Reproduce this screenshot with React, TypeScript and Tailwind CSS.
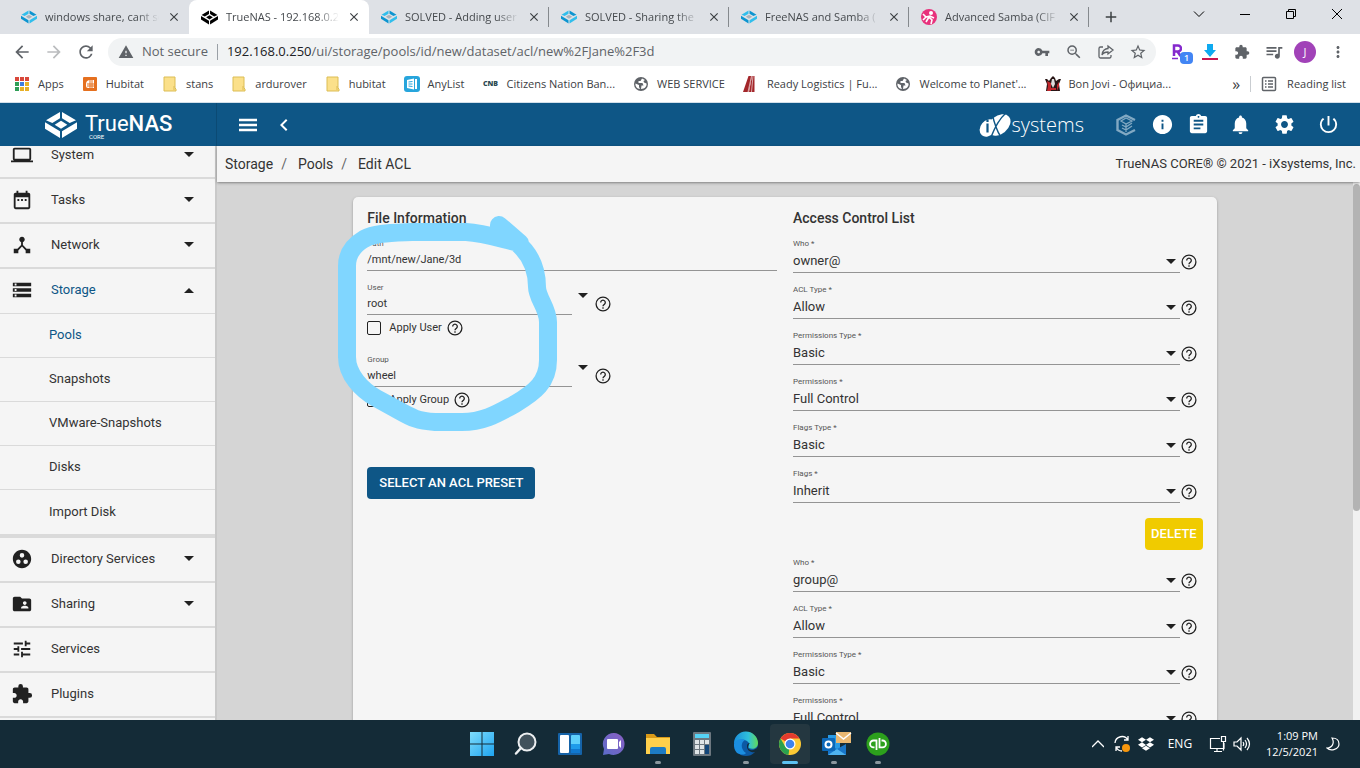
import { useState } from "react";
import type { ReactNode } from "react";
import {
    MdAdd, MdArrowBack, MdArrowForward, MdAssignment, MdChevronLeft, MdClose, MdDateRange,
    MdDeviceHub, MdExtension, MdFolderShared, MdGroupWork, MdInfo, MdLaptop,
    MdMoreVert, MdNotifications, MdPowerSettingsNew, MdQueueMusic, MdRefresh,
    MdSettings, MdStarBorder, MdStorage, MdTune, MdVpnKey, MdWarning, MdZoomOut,
} from "react-icons/md";
import { FaDropbox } from "react-icons/fa";

/* ---------- small drawings ---------- */

function NasMark({ className, light, dark, core }: { className: string; light: string; dark: string; core: string }) {
    return (
        <svg viewBox="0 0 96 78" className={className} aria-hidden="true">
            <path d="M45 0v19L22 33 3 25z" fill={light} />
            <path d="M51 0v19l23 14 19-8z" fill={dark} />
            <path d="M0 31l45 27v20L0 50z" fill={dark} />
            <path d="M96 31L51 58v20l45-28z" fill={light} />
            <path d="M48 26l19 12-19 12-19-12z" fill={core} />
        </svg>
    );
}

const BlueMark = () => <NasMark className="h-[14px] w-4 shrink-0" light="#31beec" dark="#0d95d0" core="#a8b4bd" />;
const BlackMark = () => <NasMark className="h-[15px] w-[17px] shrink-0" light="#000" dark="#000" core="#000" />;

function SambaMark() {
    return (
        <svg viewBox="0 0 16 16" className="size-4 shrink-0" aria-hidden="true">
            <circle cx="8" cy="8" r="8" fill="#e8317c" />
            <circle cx="10" cy="4" r="2" fill="#fff" />
            <path d="M2 5l3 3 4-1 4 2M8 8l-3 5M8 8l3 3-1 4M5 8l-3 3" stroke="#fff" strokeWidth="1.6" fill="none" />
        </svg>
    );
}

function AppsMark() {
    const colors = ["#d9483b", "#d9483b", "#d9483b", "#2f9e57", "#3f7de0", "#e8b026", "#2f9e57", "#e8b026", "#e8b026"];
    return (
        <svg viewBox="0 0 16 16" className="size-4" aria-hidden="true">
            {colors.map((c, i) => (
                <rect key={i} x={1 + (i % 3) * 5} y={1 + Math.floor(i / 3) * 5} width="4" height="4" fill={c} />
            ))}
        </svg>
    );
}

const HubitatMark = () => (
    <svg viewBox="0 0 16 16" className="size-4" aria-hidden="true">
        <rect x="1" y="1" width="14" height="14" rx="1" fill="#e5701f" />
        <path d="M4 8c0-3 2-4 4-4h4v8H6a2 2 0 0 1-2-2z" fill="#fff" />
        <path d="M5 8h7M5 10h7M8 4v8M10 4v8" stroke="#e5701f" strokeWidth="1" />
    </svg>
);

const FolderMark = () => (
    <svg viewBox="0 0 16 16" className="size-4" aria-hidden="true">
        <path d="M2 1h11v11l1 1v2H2z" fill="#fbe08a" stroke="#dcbd55" />
        <path d="M12 10v4" stroke="#dcbd55" />
    </svg>
);

const AnyListMark = () => (
    <svg viewBox="0 0 16 16" className="size-4" aria-hidden="true">
        <rect width="16" height="16" rx="3" fill="#27a5dc" />
        <path d="M3 4l7-1.500v11L3 12zM11 3h2v10h-2z" fill="#fff" />
        <path d="M4.500 6l4-.5M4.500 8h4M4.500 10l4 .5" stroke="#27a5dc" />
    </svg>
);

const CnbMark = () => <span className="w-4 text-center text-[7px] font-extrabold text-[#2c4a52]">CNB</span>;

const ReadyMark = () => (
    <svg viewBox="0 0 16 16" className="size-4" aria-hidden="true">
        <path d="M5.500 0h3L5 16H0zM9 0h2.500v16H6z" fill="#a3262a" />
        <path d="M7 0h2L5.500 16H3z" fill="#a3262a" />
        <path d="M8.500 0L5 16M10 0L8.500 16" stroke="#fff" strokeWidth=".6" />
    </svg>
);

const BonJoviMark = () => (
    <svg viewBox="0 0 16 16" className="size-4" aria-hidden="true">
        <path d="M0 3h2l2 2 2-3 2-2 2 2 1 3 3-2h2l-2 5 1 7H1l1-7z" fill="#281515" />
        <path d="M2 5l4 2v8H2l1-5zM12 9l2-3v4l-2 5z" fill="#c1272d" />
        <path d="M7 3h2l1 5-2 4-2-4z" fill="#ddd" />
        <path d="M6 13h5" stroke="#c1272d" strokeWidth="2" />
    </svg>
);

const Globe = () => (
    <svg viewBox="0 0 16 16" className="size-4" aria-hidden="true">
        <circle cx="8" cy="8" r="7" fill="#5f6368" />
        <path d="M9 2.500L7.500 5H5.500v2h4l1 2.500H8.500L8 13c4 0 6-3 5.500-5.500L11 6.500 10.500 5l1.500-1zM2.500 7.500L6 9v2l1 2C4 13 2 10 2.500 7.500z" fill="#fff" />
    </svg>
);

function ShareMark() {
    return (
        <svg viewBox="0 0 18 18" className="size-[18px]" fill="none" stroke="currentColor" strokeWidth="1.300" aria-hidden="true">
            <path d="M6 4H3.500A1.500 1.500 0 0 0 2 5.500v8A1.500 1.500 0 0 0 3.500 15h9a1.500 1.500 0 0 0 1.500-1.500V12" />
            <path d="M11 3l5 4-5 4V9c-3 0-5 1-6 3 0-4 3-6.500 6-6.500z" />
        </svg>
    );
}

function ReadingMark() {
    return (
        <svg viewBox="0 0 16 16" className="size-4" fill="none" stroke="#5f6368" strokeWidth="1.500" aria-hidden="true">
            <rect x="1.500" y="1.500" width="13" height="13" rx="1" />
            <path d="M4 5h1.500M4 8h1.500M4 11h1.500M7 5h5M7 8h5M7 11h5" />
        </svg>
    );
}

function Caret({ up }: { up?: boolean }) {
    return (
        <svg viewBox="0 0 10 5" className="h-[5px] w-2.5 shrink-0" aria-hidden="true">
            <path d={up ? "M0 5l5-5 5 5z" : "M0 0h10L5 5z"} fill="#212121" />
        </svg>
    );
}

const Help = () => (
    <svg viewBox="0 0 18 18" className="size-[18px] shrink-0" fill="none" stroke="#212121" strokeWidth="1.300" aria-hidden="true">
        <circle cx="9" cy="9" r="6.900" />
        <path d="M6.700 7.500a2.300 2.300 0 1 1 3.600 1.900C9.500 10 9 10.300 9 11.300M9 12.200v1.500" />
    </svg>
);

/* ---------- browser ---------- */

const tabs = [
    { title: "windows share, cant se", icon: <BlueMark /> },
    { title: "TrueNAS - 192.168.0.2", icon: <BlackMark />, active: true },
    { title: "SOLVED - Adding user", icon: <BlueMark /> },
    { title: "SOLVED - Sharing the", icon: <BlueMark /> },
    { title: "FreeNAS and Samba (", icon: <BlueMark /> },
    { title: "Advanced Samba (CIF", icon: <SambaMark /> },
];

const bookmarks: { title: string; icon: ReactNode }[] = [
    { title: "Apps", icon: <AppsMark /> },
    { title: "Hubitat", icon: <HubitatMark /> },
    { title: "stans", icon: <FolderMark /> },
    { title: "ardurover", icon: <FolderMark /> },
    { title: "hubitat", icon: <FolderMark /> },
    { title: "AnyList", icon: <AnyListMark /> },
    { title: "Citizens Nation Ban...", icon: <CnbMark /> },
    { title: "WEB SERVICE", icon: <Globe /> },
    { title: "Ready Logistics | Fu...", icon: <ReadyMark /> },
    { title: "Welcome to Planet'...", icon: <Globe /> },
    { title: "Bon Jovi - Официа...", icon: <BonJoviMark /> },
];

function TabStrip() {
    return (
        <div className="flex h-[34px] shrink-0 items-stretch bg-[#dee1e6] pl-[9px] text-[#45494d]">
            {tabs.map((tab, i) => (
                <div
                    key={tab.title}
                    className={`relative flex min-w-0 basis-[180px] items-center gap-2 pr-2 pl-3 ${tab.active ? "rounded-t-lg bg-white" : ""}`}
                >
                    {tab.icon}
                    <span className="min-w-0 flex-1 mask-r-from-80% text-[11px] whitespace-nowrap">{tab.title}</span>
                    <button aria-label="Close tab" className="shrink-0">
                        <MdClose className="size-[14px] text-[#3c4043]" />
                    </button>
                    {i > 1 && <span className="absolute right-0 h-5 w-px bg-[#85898d]" />}
                </div>
            ))}
            <button aria-label="New tab" className="flex w-11 items-center justify-center">
                <MdAdd className="size-[18px] text-[#3c4043]" />
            </button>
            <div className="ml-auto flex text-black">
                <button aria-label="Search tabs" className="flex w-[46px] items-start justify-center pt-2">
                    <svg viewBox="0 0 12 12" className="size-3" fill="none" stroke="currentColor"><path d="M1 3.500l5 5 5-5" /></svg>
                </button>
                <button aria-label="Minimize" className="flex w-[46px] items-start justify-center pt-2">
                    <svg viewBox="0 0 12 12" className="size-3" fill="none" stroke="currentColor"><path d="M1 6.500h10" /></svg>
                </button>
                <button aria-label="Restore" className="flex w-[46px] items-start justify-center pt-2">
                    <svg viewBox="0 0 12 12" className="size-3" fill="none" stroke="currentColor"><path d="M1.500 3.500h7v7h-7zM3.500 3.500v-2h7v7h-2" /></svg>
                </button>
                <button aria-label="Close" className="flex w-[46px] items-start justify-center pt-2">
                    <svg viewBox="0 0 12 12" className="size-3" fill="none" stroke="currentColor"><path d="M1 1l10 10M11 1L1 11" /></svg>
                </button>
            </div>
        </div>
    );
}

function AddressBar() {
    return (
        <div className="flex h-9 shrink-0 items-center bg-white pr-2 pl-3 text-[#5f6368]">
            <button aria-label="Back" className="w-8"><MdArrowBack className="size-5" /></button>
            <button aria-label="Forward" className="w-8"><MdArrowForward className="size-5 text-[#babcbe]" /></button>
            <button aria-label="Reload" className="w-8"><MdRefresh className="size-5" /></button>
            <div className="flex h-7 flex-1 items-center rounded-full bg-[#f1f3f4] px-2">
                <MdWarning className="ml-0.5 size-4" />
                <span className="ml-2 text-[13px]">Not secure</span>
                <span className="mx-[9px] h-4 w-px bg-[#9aa0a6]" />
                <p className="flex-1 text-[13px] whitespace-nowrap">
                    <span className="text-[#202124]">192.168.0.250</span>/ui/storage/pools/id/new/dataset/acl/new%2FJane%2F3d
                </p>
                <div className="flex items-center">
                    <button aria-label="Passwords" className="flex w-8 justify-center"><MdVpnKey className="size-4" /></button>
                    <button aria-label="Zoom" className="flex w-8 justify-center"><MdZoomOut className="size-[18px]" /></button>
                    <button aria-label="Share" className="flex w-8 justify-center"><ShareMark /></button>
                    <button aria-label="Bookmark" className="-mr-1.5 flex w-8 justify-center"><MdStarBorder className="size-[18px]" /></button>
                </div>
            </div>
            <div className="ml-1.5 flex items-center">
                <button aria-label="Rakuten" className="relative h-7 w-8 pl-2.5 text-left">
                    <svg viewBox="0 0 10 16" className="h-4 w-2.5" fill="none" stroke="#8529cd" strokeWidth="2.500" aria-hidden="true">
                        <path d="M2 12V1.500h4a2.500 2.500 0 0 1 0 6H3M5.500 7.500L8.500 12" />
                        <path d="M0 14.500h6" strokeWidth="1.500" />
                    </svg>
                    <span className="absolute top-3.5 left-[18px] rounded-sm bg-[#4285f4] px-1 text-[9px] leading-3 font-semibold text-white">1</span>
                </button>
                <button aria-label="Downloads" className="flex w-8 justify-center">
                    <svg viewBox="0 0 16 16" className="size-4"><path d="M5 0h6v6h3l-6 7-6-7h3z" fill="#0eaaf0" /><path d="M0 15h16" stroke="#c8154f" strokeWidth="2" /></svg>
                </button>
                <button aria-label="Extensions" className="flex w-8 justify-center"><MdExtension className="size-4" /></button>
                <button aria-label="Media" className="flex w-8 justify-center"><MdQueueMusic className="size-5" /></button>
                <button aria-label="Profile" className="mx-1 flex size-[22px] items-center justify-center rounded-full bg-[#a142b8] text-[11px] text-white">J</button>
                <button aria-label="Menu" className="ml-1 flex w-7 justify-center"><MdMoreVert className="size-[18px]" /></button>
            </div>
        </div>
    );
}

function BookmarksBar() {
    return (
        <nav className="flex h-[33px] shrink-0 items-center border-b border-[#d3e0ea] bg-white px-3.5 pb-1 text-[11px] whitespace-nowrap text-[#3c4043]">
            <div className="flex items-center gap-[18px]">
                {bookmarks.map((b, i) => (
                    <a key={i} href="#" className="flex items-center gap-2">
                        {b.icon}
                        {b.title}
                    </a>
                ))}
            </div>
            <button aria-label="More bookmarks" className="ml-auto px-2.5 text-[16px] leading-4">»</button>
            <a href="#" className="flex items-center gap-2.5 border-l border-[#c9cdd1] pl-2.5"><ReadingMark />Reading list</a>
        </nav>
    );
}

/* ---------- TrueNAS ---------- */

function Header() {
    return (
        <header className="flex h-[43px] shrink-0 items-center bg-[#0e5686] text-white">
            <a href="#" aria-label="TrueNAS Core" className="flex h-full w-[217px] items-center border-r border-[#0b4a74] pl-[45px]">
                <NasMark className="h-[26px] w-8" light="#fff" dark="#fff" core="#fff" />
                <span className="mt-1 ml-2 flex flex-col">
                    <span className="text-[22px] leading-5">Tru<span>e</span><span className="font-medium">NAS</span></span>
                    <span className="pl-1 text-[6px] leading-[6px]">CORE</span>
                </span>
            </a>
            <button aria-label="Toggle menu" className="ml-[22px]">
                <svg viewBox="0 0 18 14" className="h-3.5 w-[18px]" stroke="currentColor" strokeWidth="2.500"><path d="M0 2h18M0 7h18M0 12h18" /></svg>
            </button>
            <button aria-label="Collapse menu" className="ml-[15px]"><MdChevronLeft className="size-6" stroke="currentColor" /></button>
            <div className="mr-0.5 ml-auto flex items-center">
                <a href="#" aria-label="iXsystems" className="mr-6 flex items-center">
                    <svg viewBox="0 0 32 24" className="h-6 w-8" aria-hidden="true">
                        <ellipse cx="9" cy="15" rx="9.500" ry="7.500" transform="rotate(-50 9 15)" fill="#fff" />
                        <ellipse cx="20" cy="12" rx="13" ry="9" transform="rotate(-40 20 12)" fill="#fff" />
                        <path d="M8.500 10.500v9M8.500 6.500v2.500" stroke="#0e5686" strokeWidth="2.200" />
                        <path d="M13 0c2 9 4 17 9 24M27 0c-7 6-11 14-15 24" stroke="#0e5686" strokeWidth="1.400" fill="none" />
                    </svg>
                    <span className="ml-px font-['Open_Sans'] text-[20px] leading-6 font-light">systems</span>
                </a>
                <button aria-label="TrueCommand" className="flex w-9 justify-center">
                    <svg viewBox="0 0 20 22" className="h-[22px] w-5" fill="none" stroke="#82a9c3" strokeWidth="2.400" aria-hidden="true">
                        <path d="M19 6L10 1.500 1.500 6v10l8.500 4.500L19 16" />
                        <path d="M16 7l-6-3-5 3 5 3zM6 11l4 2 6-4M6 14l4 2 6-4M10 10v8" strokeWidth="1.300" />
                    </svg>
                </button>
                <button aria-label="About" className="flex w-9 justify-center"><MdInfo className="size-[23px]" /></button>
                <button aria-label="Task manager" className="flex w-9 justify-center"><MdAssignment className="size-[23px]" /></button>
            </div>
            <div className="flex items-center pr-2.5">
                <button aria-label="Notifications" className="flex w-11 justify-center"><MdNotifications className="size-[23px]" /></button>
                <button aria-label="Settings" className="flex w-11 justify-center"><MdSettings className="size-[23px]" /></button>
                <button aria-label="Power" className="flex w-11 justify-center"><MdPowerSettingsNew className="size-[23px]" /></button>
            </div>
        </header>
    );
}

function SideItem({ icon, label, caret, open }: { icon: ReactNode; label: string; caret?: boolean; open?: boolean }) {
    return (
        <li>
            <button
                aria-expanded={caret ? !!open : undefined}
                className={`flex h-[45px] w-full items-center border-[#dadada] pr-[21px] pb-0.5 pl-[11px] text-left ${open ? "border-b text-[#0e5686]" : "border-b-2"}`}
            >
                <span className="text-[22px] text-[#212121]">{icon}</span>
                <span className="ml-[18px] flex-1">{label}</span>
                {caret && <Caret up={open} />}
            </button>
        </li>
    );
}

const storageItems = ["Pools", "Snapshots", "VMware-Snapshots", "Disks", "Import Disk"];

function Sidebar() {
    return (
        <nav className="w-[217px] shrink-0 overflow-hidden border-r-2 border-[#c9c9c9] bg-[#f5f5f5] text-[13px] text-[#333]">
            <ul className="-mt-3">
                <SideItem icon={<MdLaptop />} label="System" caret />
                <SideItem icon={<MdDateRange />} label="Tasks" caret />
                <SideItem icon={<MdDeviceHub />} label="Network" caret />
                <SideItem icon={<MdStorage />} label="Storage" caret open />
                <li>
                    <ul className="border-b-4 border-[#dadada]">
                        {storageItems.map((item, i) => (
                            <li key={item}>
                                <a
                                    href="#"
                                    className={`flex h-11 items-center border-[#dadada] pb-px pl-[49px] ${i === 0 ? "text-[#0e5686]" : ""} ${i < 4 ? "border-b" : ""}`}
                                >
                                    {item}
                                </a>
                            </li>
                        ))}
                    </ul>
                </li>
                <SideItem icon={<MdGroupWork />} label="Directory Services" caret />
                <SideItem icon={<MdFolderShared />} label="Sharing" caret />
                <SideItem icon={<MdTune />} label="Services" />
                <SideItem icon={<MdExtension />} label="Plugins" />
            </ul>
        </nav>
    );
}

function TextField({ id, label, value }: { id: string; label: string; value: string }) {
    return (
        <div className="flex flex-1 flex-col border-b border-[#949494]">
            <label htmlFor={id} className="text-[8px] leading-3 text-[#555]">{label}</label>
            <input id={id} defaultValue={value} className="h-5 w-full pb-0.5 text-[11px] outline-none" />
        </div>
    );
}

function OwnerField({ name, value }: { name: string; value: string }) {
    const [apply, setApply] = useState(false);
    const id = name.toLowerCase();
    return (
        <div>
            <div className="flex items-center">
                <div className="flex w-1/2"><TextField id={id} label={name} value={value} /></div>
                <button aria-label={`Choose ${id}`} className="flex h-5 w-[22px] justify-center pt-1"><Caret /></button>
                <div className="pt-2.5"><Help /></div>
            </div>
            <div className="mt-[5px] flex h-4 items-center">
                <input
                    id={`apply-${id}`}
                    type="checkbox"
                    checked={apply}
                    onChange={(e) => setApply(e.target.checked)}
                    className="size-3.5 appearance-none rounded-xs border border-[#212121] checked:bg-[#0e5686]"
                />
                <label htmlFor={`apply-${id}`} className="mr-1 ml-2 text-[11px]">Apply {name}</label>
                <Help />
            </div>
        </div>
    );
}

function SelectField({ id, label, value }: { id: string; label: string; value: string }) {
    return (
        <div className="flex items-end">
            <div className="relative flex-1 border-b border-[#949494]">
                <label htmlFor={id} className="block text-[8px] leading-3 text-[#555]">{label} *</label>
                <select id={id} className="block h-[22px] w-full appearance-none text-[13px] outline-none">
                    <option>{value}</option>
                </select>
                <span className="pointer-events-none absolute right-1 bottom-2"><Caret /></span>
            </div>
            <div className="mr-[5px] pb-0.5"><Help /></div>
        </div>
    );
}

const aclEntries = ["owner@", "group@"];

function AclEntry({ who }: { who: string }) {
    const fields = [
        ["Who", who],
        ["ACL Type", "Allow"],
        ["Permissions Type", "Basic"],
        ["Permissions", "Full Control"],
        ["Flags Type", "Basic"],
        ["Flags", "Inherit"],
    ];
    return (
        <div className="mb-[7px]">
            <div className="flex flex-col gap-[11px]">
                {fields.map(([label, value]) => (
                    <SelectField key={label} id={`${who}-${label}`} label={label} value={value} />
                ))}
            </div>
            <div className="mt-[15px] flex justify-end">
                <button type="button" className="h-8 rounded-sm bg-[#f0cb00] px-1.5 text-[13px] font-medium text-white">DELETE</button>
            </div>
        </div>
    );
}

function MarkerCircle() {
    return (
        <svg
            viewBox="337 209 230 230"
            className="pointer-events-none absolute top-3 -left-4 size-[230px]"
            fill="none"
            stroke="#80d6ff"
            strokeWidth="18"
            strokeLinecap="round"
            strokeLinejoin="round"
            aria-hidden="true"
        >
            <path d="M499 225L520 243C505 240 485 233 466 232H412C390 233 375 233 364 239C352 246 347 256 347 266V357C347 375 362 390 376 398L398 410C412 418 418 421 435 422H462C485 422 500 412 515 404C535 392 548 382 548 360V322C548 308 537 298 537 287C537 270 532 255 516 242" />
        </svg>
    );
}

function EditAcl() {
    return (
        <main className="flex min-w-0 flex-1 flex-col">
            <div className="z-10 flex h-9 shrink-0 items-center justify-between bg-[#f5f5f5] pr-1 pl-2 text-[#333] shadow-sm shadow-black/30">
                <nav aria-label="Breadcrumb" className="flex text-[14px]">
                    <a href="#">Storage</a>
                    <span className="mr-[11px] ml-2 text-[#666]">/</span>
                    <a href="#">Pools</a>
                    <span className="mr-[11px] ml-2 text-[#666]">/</span>
                    <span>Edit ACL</span>
                </nav>
                <span className="text-[13px]">TrueNAS CORE® © 2021 - iXsystems, Inc.</span>
            </div>
            <div className="flex min-h-0 flex-1 bg-[#d5d5d5]">
                <div className="min-w-0 flex-1 overflow-hidden pt-[15px]">
                    <form className="relative mx-auto grid w-[76%] grid-cols-2 gap-4 rounded-[5px] bg-[#f5f5f5] px-3.5 pt-3 text-[#333] shadow-sm shadow-black/25">
                        <section>
                            <h2 className="mb-[11px] text-[14px] leading-[18px] font-medium">File Information</h2>
                            <TextField id="path" label="Path" value="/mnt/new/Jane/3d" />
                            <div className="mt-[11px] flex flex-col gap-[18px]">
                                <OwnerField name="User" value="root" />
                                <OwnerField name="Group" value="wheel" />
                            </div>
                            <button type="button" className="mt-[59px] h-8 rounded-sm bg-[#0e5686] px-3 text-[13px] font-medium text-white">
                                SELECT AN ACL PRESET
                            </button>
                        </section>
                        <section>
                            <h2 className="mb-[11px] text-[14px] leading-[18px] font-medium">Access Control List</h2>
                            {aclEntries.map((who) => (
                                <AclEntry key={who} who={who} />
                            ))}
                        </section>
                        <MarkerCircle />
                    </form>
                </div>
                <div className="w-[7px] shrink-0 bg-[#f1f1f1] pt-0.5">
                    <div className="h-[61%] rounded-full bg-[#b3b3b3]" />
                </div>
            </div>
        </main>
    );
}

/* ---------- taskbar ---------- */

const taskIcons: { name: string; running?: boolean; active?: boolean; icon: ReactNode }[] = [
    {
        name: "Start",
        icon: (
            <>
                <defs>
                    <linearGradient id="start-fill" x1="0" y1="0" x2="1" y2="1">
                        <stop offset="0" stopColor="#7fdcfb" />
                        <stop offset="1" stopColor="#1ea4f0" />
                    </linearGradient>
                </defs>
                <path d="M0 0h11.500v11.500H0zM12.500 0H24v11.500H12.500zM0 12.500h11.500V24H0zM12.500 12.500H24V24H12.500z" fill="url(#start-fill)" />
            </>
        ),
    },
    {
        name: "Search",
        icon: (
            <>
                <circle cx="13" cy="10" r="8.500" fill="#41525c" stroke="#eceff1" strokeWidth="2" />
                <path d="M7 16l-5 5.500" stroke="#eceff1" strokeWidth="2.500" strokeLinecap="round" />
            </>
        ),
    },
    {
        name: "Widgets",
        icon: (
            <>
                <rect y="1" width="24" height="22" rx="1" fill="#1563a8" />
                <rect x="2" y="3" width="9" height="18" rx="1" fill="#fff" />
                <rect x="13" y="3" width="9" height="10" rx="1" fill="#5fd0fb" />
                <rect x="13" y="12" width="9" height="5" fill="#1f9bea" />
                <rect x="13" y="17" width="9" height="4" fill="#1079d0" />
            </>
        ),
    },
    {
        name: "Chat",
        icon: (
            <>
                <defs>
                    <linearGradient id="chat-fill" x1="1" y1="0" x2="0" y2="1">
                        <stop offset="0" stopColor="#8a5fc4" />
                        <stop offset="1" stopColor="#5b6cc8" />
                    </linearGradient>
                </defs>
                <path d="M12 1a11 11 0 1 1-5 21L1 23l1-6A11 11 0 0 1 12 1z" fill="url(#chat-fill)" />
                <rect x="5" y="7" width="11" height="10" rx="1" fill="#fff" />
                <path d="M17 10l2-2v8l-2-2z" fill="#fff" />
            </>
        ),
    },
    {
        name: "File Explorer",
        running: true,
        icon: (
            <>
                <path d="M0 2h8l3 3h13v17H0z" fill="#d99a18" />
                <path d="M0 6h24v16H0z" fill="#ffd04c" />
                <path d="M4 22v-5a2 2 0 0 1 2-2h12a2 2 0 0 1 2 2v5z" fill="#1d7bc4" />
            </>
        ),
    },
    {
        name: "Calculator",
        icon: (
            <>
                <rect x="3" width="18" height="24" rx="1" fill="#6d7880" />
                <rect x="5" y="2" width="14" height="4" fill="#56d3f5" />
                <path d="M5 8h4v4H5zM10 8h4v4h-4zM15 8h4v4h-4zM5 13h4v4H5zM10 13h4v4h-4zM5 18h4v4H5zM10 18h4v4h-4z" fill="#dfe4e7" />
                <path d="M15 13h4v9h-4z" fill="#12467a" />
            </>
        ),
    },
    {
        name: "Edge",
        running: true,
        icon: (
            <>
                <defs>
                    <linearGradient id="edge-top" x1="0" x2="1">
                        <stop offset="0" stopColor="#1b8fdb" />
                        <stop offset="0.600" stopColor="#2fc0dc" />
                        <stop offset="1" stopColor="#62d957" />
                    </linearGradient>
                </defs>
                <circle cx="12" cy="12" r="12" fill="#0c59a4" />
                <path d="M0 12A12 12 0 0 1 24 11c0 5-5 7-9 5-1-1 0-2 0-4C15 8 5 5 0 12z" fill="url(#edge-top)" />
                <path d="M0 12c2-5 8-6 11-4-4 2-5 9 1 13-2 3-7 1-9 0a12 12 0 0 1-3-9z" fill="#1b8ee0" />
                <path d="M14 16c2 3 6 3 10-1l1 3-3 2c-5 1-9-1-9-6 0-2 1-3 3-3-2 2-2 3-2 5z" fill="#142b37" />
            </>
        ),
    },
    {
        name: "Chrome",
        running: true,
        active: true,
        icon: (
            <>
                <circle cx="12" cy="12" r="11" fill="#fcc934" />
                <path d="M12 12L2.500 6.500A11 11 0 0 1 21.500 6.500H12z" fill="#e33b2e" />
                <path d="M12 12l-1 11A11 11 0 0 1 2.500 6.500L7.500 15z" fill="#2aa14f" />
                <path d="M12 12l4.500 2.500L12 23h-1.500z" fill="#fcc934" />
                <circle cx="12" cy="12" r="5.500" fill="#fff" />
                <circle cx="12" cy="12" r="4.300" fill="#3f83ee" />
            </>
        ),
    },
    {
        name: "Outlook",
        running: true,
        icon: (
            <>
                <path d="M6 3h12v18H6z" fill="#2a9be4" />
                <path d="M6 23V12l9 5 9-5v11z" fill="#1876c9" />
                <path d="M6 23l9-6 9 6z" fill="#4fb4f0" />
                <rect y="6" width="13" height="13" rx="1" fill="#0c68b8" />
                <circle cx="6.500" cy="12.500" r="3" fill="none" stroke="#fff" strokeWidth="2" />
                <path d="M14 0h15v11H14z" fill="#e9b872" />
                <path d="M14 1l7.500 6L29 1" stroke="#fff" strokeWidth="1.500" fill="none" />
            </>
        ),
    },
    {
        name: "QuickBooks",
        running: true,
        icon: (
            <>
                <circle cx="12" cy="12" r="11.500" fill="#2ca01c" />
                <path d="M10.500 18V8.500H7.500a3.400 3.400 0 0 0 0 6.800h1M13.500 6v9.300h3a3.400 3.400 0 0 0 0-6.800h-1" fill="none" stroke="#fff" strokeWidth="1.800" />
            </>
        ),
    },
];

function Taskbar() {
    return (
        <footer className="grid h-12 shrink-0 grid-cols-[1fr_auto_1fr] items-center bg-[#142b37] text-white">
            <div />
            <div className="flex">
                {taskIcons.map((t) => (
                    <button
                        key={t.name}
                        aria-label={t.name}
                        className={`relative mx-0.5 flex size-10 items-center justify-center rounded-sm ${t.active ? "bg-[#243740]" : ""}`}
                    >
                        <svg viewBox="0 0 24 24" className="size-6 overflow-visible" aria-hidden="true">{t.icon}</svg>
                        {t.running && (
                            <span className={`absolute bottom-0 h-[3px] rounded-full ${t.active ? "w-4 bg-[#5cc2f2]" : "w-1.5 bg-[#8b979e]"}`} />
                        )}
                    </button>
                ))}
            </div>
            <div className="flex items-center justify-end pr-5 text-[11px]">
                <button aria-label="Hidden icons" className="flex w-6 justify-center">
                    <svg viewBox="0 0 12 12" className="size-3" fill="none" stroke="currentColor" strokeWidth="1.300"><path d="M0 9l6-6 6 6" /></svg>
                </button>
                <button aria-label="Sync" className="flex w-6 justify-center">
                    <svg viewBox="0 0 18 18" className="size-[18px]" fill="none" stroke="currentColor" strokeWidth="1.300">
                        <path d="M2 8a7 7 0 0 1 13-3M15 1v4h-4M3 16v-4h4M3 12c1 2 3 4 6 4" />
                        <circle cx="13" cy="13" r="4" fill="#f7960c" stroke="none" />
                    </svg>
                </button>
                <button aria-label="Dropbox" className="flex w-6 justify-center"><FaDropbox className="size-4" /></button>
                <button className="w-11 text-[12px]">ENG</button>
                <button aria-label="Network" className="ml-1 flex w-6 justify-center">
                    <svg viewBox="0 0 18 18" className="size-[18px]" fill="none" stroke="currentColor" strokeWidth="1.200">
                        <path d="M11 3.500H1.500v10H15V8M5 16.500h8M8 13.500v3M12.500 1.500h4v5h-4zM14.500 6.500v9" />
                    </svg>
                </button>
                <button aria-label="Volume" className="flex w-6 justify-center">
                    <svg viewBox="0 0 18 18" className="size-[18px]" fill="none" stroke="currentColor" strokeWidth="1.200">
                        <path d="M1 7h3l4-4v12l-4-4H1zM10 7q1.500 2 0 4M12 5q3 4 0 8M14 3q5 6 0 12" />
                    </svg>
                </button>
                <button className="mr-2 ml-3 text-right leading-4">
                    1:09 PM<br />12/5/2021
                </button>
                <svg viewBox="0 0 14 14" className="size-3.5" fill="none" stroke="currentColor" strokeWidth="1.200" aria-hidden="true">
                    <path d="M6 1c4 0 7 2 7 6 0 5-8 8-12 4 5 0 8-5 5-10z" />
                </svg>
            </div>
        </footer>
    );
}

export default function App() {
    return (
        <div className="flex h-screen flex-col overflow-hidden font-['Open_Sans','Noto_Sans',sans-serif]">
            <TabStrip />
            <AddressBar />
            <BookmarksBar />
            <div className="flex min-h-0 flex-1 flex-col font-[Roboto,sans-serif]">
                <Header />
                <div className="flex min-h-0 flex-1">
                    <Sidebar />
                    <EditAcl />
                </div>
            </div>
            <Taskbar />
        </div>
    );
}
